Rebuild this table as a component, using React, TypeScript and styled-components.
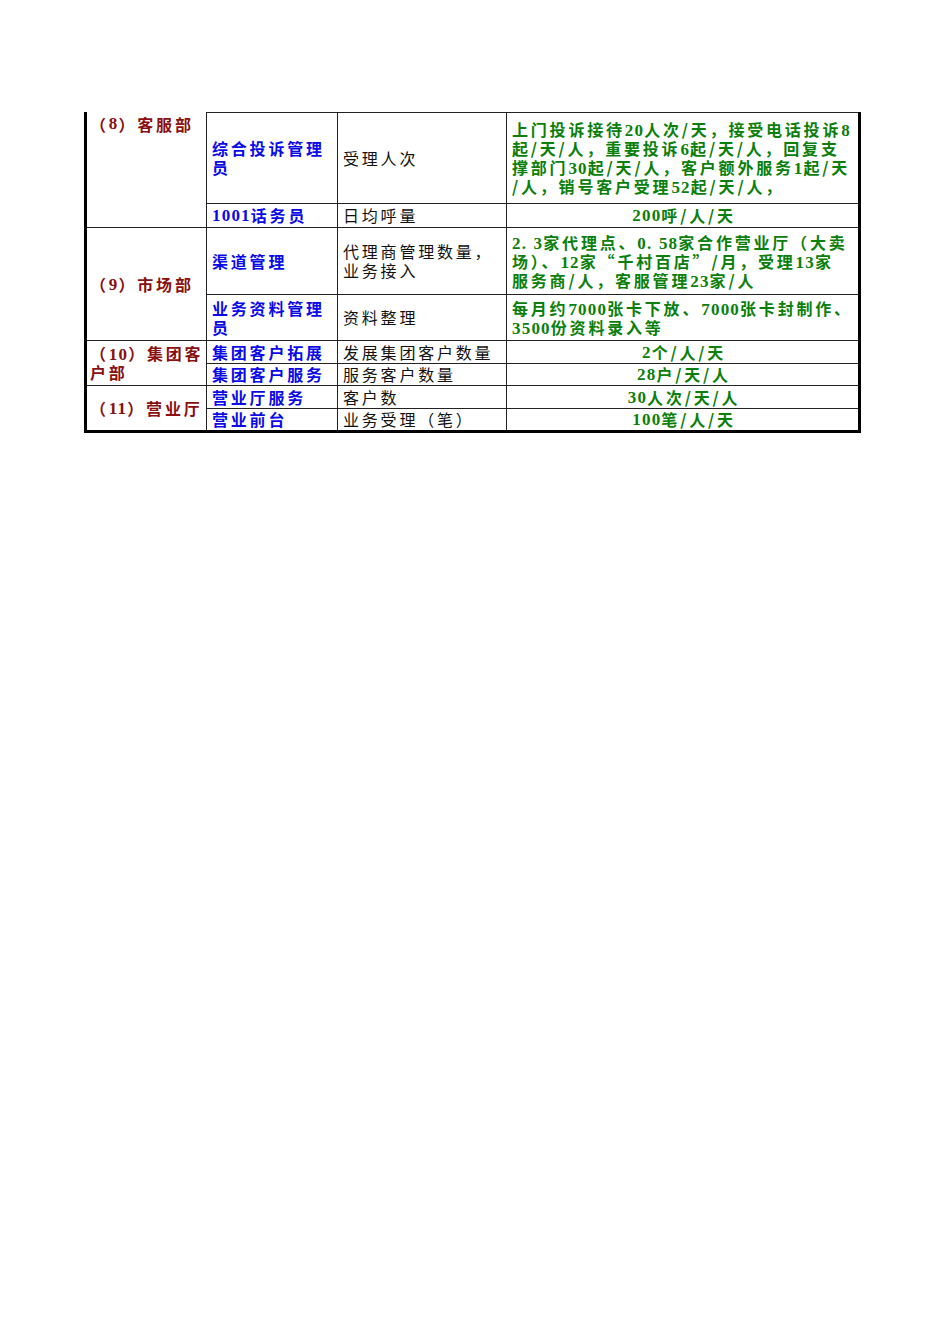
import styled, { createGlobalStyle } from "styled-components";

const GlobalStyle = createGlobalStyle`
    html, body {
        margin: 0;
        padding: 0;
        background: #ffffff;
    }
    body {
        font-family: "Noto Sans CJK SC", "DejaVu Sans", sans-serif;
    }
`;

const Page = styled.div`
    width: 950px;
    min-height: 1344px;
    padding: 112px 0 0 84px;
    box-sizing: border-box;
`;

const Sheet = styled.div`
    display: grid;
    grid-template-columns: 120px 131px 169px 351px;
    grid-template-rows: 92px 24px 67px 46px 23px 22px 23px 21px;
    width: max-content;
    border-left: 3px solid #000;
    border-right: 3px solid #000;
    border-bottom: 3px solid #000;
`;

type Tone = "dept" | "role" | "metric" | "value";

const toneColor: Record<Tone, string> = {
    dept: "#8a0f0f",
    role: "#0a0ae8",
    metric: "#111111",
    value: "#0a800a"
};

const Cell = styled.div<{
    $tone: Tone;
    $span?: number;
    $center?: boolean;
    $top?: boolean;
    $first?: boolean;
    $last?: boolean;
    $end?: boolean;
}>`
    box-sizing: border-box;
    grid-row: span ${(p) => p.$span ?? 1};
    display: flex;
    align-items: ${(p) => (p.$top ? "flex-start" : "center")};
    justify-content: ${(p) => (p.$center ? "center" : "flex-start")};
    text-align: ${(p) => (p.$center ? "center" : "left")};
    padding: ${(p) => (p.$top ? "3px" : "0")} 2px 0
        ${(p) => (p.$tone === "dept" ? "3px" : "5px")};
    border-top: ${(p) => (p.$first ? "1px solid #222" : "none")};
    border-right: ${(p) => (p.$end ? "none" : "1px solid #222")};
    border-bottom: ${(p) => (p.$last ? "none" : "1px solid #222")};
    color: ${(p) => toneColor[p.$tone]};
    font-size: 16px;
    line-height: 19px;
    letter-spacing: 2.8px;
    font-weight: ${(p) => (p.$tone === "metric" ? 400 : 700)};
    white-space: nowrap;
`;

const Lines = styled.span`
    display: block;
`;

const Num = styled.span`
    font-family: "Liberation Serif", "Noto Sans CJK SC", serif;
    font-size: 17px;
    line-height: 1;
    letter-spacing: 1.2px;
`;

// digits and decimal points are set in a narrow serif, as in the sheet
const T = ({ children }: { children: string }) => (
    <>
        {children.split(/([0-9.]+)/).map((part, i) =>
            /^[0-9.]+$/.test(part) ? <Num key={i}>{part}</Num> : part
        )}
    </>
);

const Multi = ({ lines }: { lines: string[] }) => (
    <Lines>
        {lines.map((line, i) => (
            <span key={i}>
                {i > 0 && <br />}
                <T>{line}</T>
            </span>
        ))}
    </Lines>
);

const App = () => {
    return (
        <Page>
            <GlobalStyle />
            <Sheet>
                <Cell $tone="dept" $span={2} $top>
                    （<T>8</T>）客服部
                </Cell>
                <Cell $tone="role" $first>
                    <Multi lines={["综合投诉管理", "员"]} />
                </Cell>
                <Cell $tone="metric" $first>
                    受理人次
                </Cell>
                <Cell $tone="value" $first $end>
                    <Multi
                        lines={[
                            "上门投诉接待20人次/天，接受电话投诉8",
                            "起/天/人，重要投诉6起/天/人，回复支",
                            "撑部门30起/天/人，客户额外服务1起/天",
                            "/人，销号客户受理52起/天/人，"
                        ]}
                    />
                </Cell>

                <Cell $tone="role">
                    <T>1001话务员</T>
                </Cell>
                <Cell $tone="metric">日均呼量</Cell>
                <Cell $tone="value" $center $end>
                    <T>200呼/人/天</T>
                </Cell>

                <Cell $tone="dept" $span={2}>
                    （<T>9</T>）市场部
                </Cell>
                <Cell $tone="role">渠道管理</Cell>
                <Cell $tone="metric">
                    <Multi lines={["代理商管理数量，", "业务接入"]} />
                </Cell>
                <Cell $tone="value" $end>
                    <Multi
                        lines={[
                            "2. 3家代理点、0. 58家合作营业厅（大卖",
                            "场）、12家“千村百店”/月，受理13家",
                            "服务商/人，客服管理23家/人"
                        ]}
                    />
                </Cell>

                <Cell $tone="role">
                    <Multi lines={["业务资料管理", "员"]} />
                </Cell>
                <Cell $tone="metric">资料整理</Cell>
                <Cell $tone="value" $end>
                    <Multi
                        lines={[
                            "每月约7000张卡下放、7000张卡封制作、",
                            "3500份资料录入等"
                        ]}
                    />
                </Cell>

                <Cell $tone="dept" $span={2}>
                    <Multi lines={["（10）集团客", "户部"]} />
                </Cell>
                <Cell $tone="role">集团客户拓展</Cell>
                <Cell $tone="metric">发展集团客户数量</Cell>
                <Cell $tone="value" $center $end>
                    <T>2个/人/天</T>
                </Cell>

                <Cell $tone="role">集团客户服务</Cell>
                <Cell $tone="metric">服务客户数量</Cell>
                <Cell $tone="value" $center $end>
                    <T>28户/天/人</T>
                </Cell>

                <Cell $tone="dept" $span={2} $last>
                    （<T>11</T>）营业厅
                </Cell>
                <Cell $tone="role">营业厅服务</Cell>
                <Cell $tone="metric">客户数</Cell>
                <Cell $tone="value" $center $end>
                    <T>30人次/天/人</T>
                </Cell>

                <Cell $tone="role" $last>
                    营业前台
                </Cell>
                <Cell $tone="metric" $last>
                    业务受理（笔）
                </Cell>
                <Cell $tone="value" $center $end $last>
                    <T>100笔/人/天</T>
                </Cell>
            </Sheet>
        </Page>
    );
};

export default App;
